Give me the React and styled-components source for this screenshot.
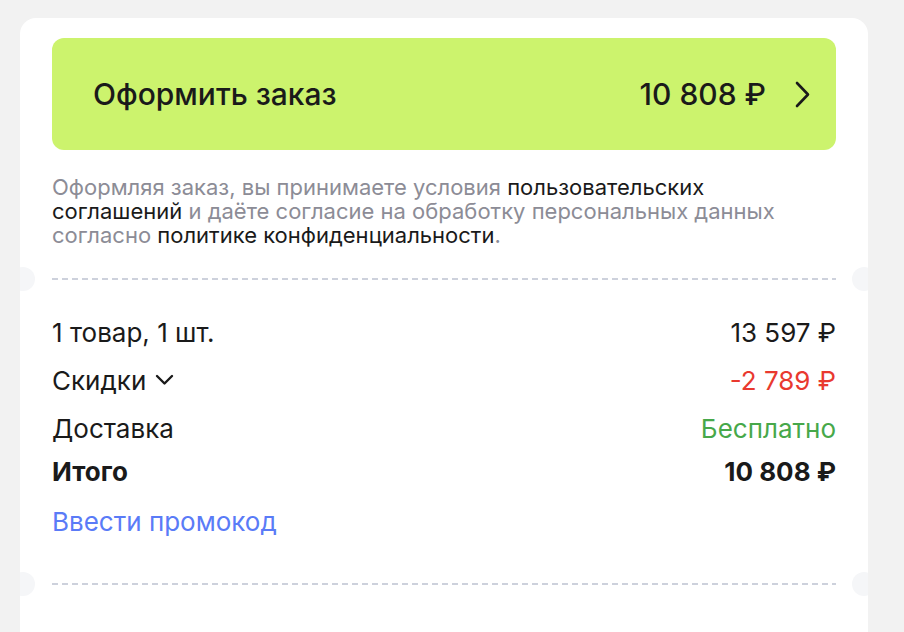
import React from 'react'
import styled, { createGlobalStyle } from 'styled-components'

const GlobalStyle = createGlobalStyle`
    html, body {
        margin: 0;
        padding: 0;
        background: #f2f2f2;
    }
    body {
        font-family: Inter, "Noto Sans", sans-serif;
        color: #1a1a1a;
        -webkit-font-smoothing: antialiased;
    }
`

const Page = styled.div`
    padding: 18px 0 0 20px;
    height: 614px;
    overflow: hidden;
`

const Card = styled.div`
    position: relative;
    width: 848px;
    min-height: 614px;
    box-sizing: border-box;
    background: #fff;
    border-radius: 16px 16px 0 0;
    padding: 20px 32px 0;
    overflow: hidden;
`

const CheckoutButton = styled.button`
    width: 100%;
    height: 112px;
    border: none;
    border-radius: 12px;
    background: #ccf36d;
    display: flex;
    align-items: center;
    justify-content: space-between;
    padding: 0 26px 0 41px;
    font-family: inherit;
    color: #1a1a1a;
    cursor: pointer;
    .label {
        font-size: 30px;
        font-weight: 500;
    }
    .total {
        display: flex;
        align-items: center;
        gap: 28px;
        font-size: 30px;
        font-weight: 500;
    }
`

const Legal = styled.p`
    margin: 25px 0 0;
    max-width: 745px;
    font-size: 22px;
    line-height: 24px;
    color: #8c8c96;
    a {
        color: #1a1a1a;
        text-decoration: none;
    }
`

const Divider = styled.div`
    position: relative;
    height: 2px;
    margin: ${props => props.$top}px 0 0;
    background-image: linear-gradient(to right, #cdd1dc 60%, transparent 60%);
    background-size: 10px 2px;
    &:before, &:after {
        content: '';
        position: absolute;
        top: -11px;
        width: 24px;
        height: 24px;
        border-radius: 50%;
        background: #f5f6f8;
    }
    &:before {
        left: -41px;
    }
    &:after {
        right: -40px;
    }
`

const Summary = styled.div`
    display: flex;
    flex-direction: column;
    gap: 16px;
    padding: 36px 0 0;
`

const Row = styled.div`
    display: flex;
    justify-content: space-between;
    align-items: center;
    height: 32px;
    font-size: 26px;
    font-weight: ${props => props.$bold ? 700 : 400};
    margin-top: ${props => props.$shift || 0}px;
`

const Value = styled.span`
    color: ${props => props.$color || '#1a1a1a'};
`

const Toggle = styled.span`
    display: flex;
    align-items: center;
    gap: 9px;
`

const PromoLink = styled.a`
    display: block;
    font-size: 26px;
    line-height: 32px;
    color: #5a7bf7;
    text-decoration: none;
    margin-top: 19px;
`

const ChevronRight = () => (
    <svg width="16" height="27" viewBox="0 0 16 27" fill="none">
        <polyline points="3,2 14,13.5 3,25" stroke="#1a1a1a" strokeWidth="2.6" strokeLinecap="round" strokeLinejoin="round" />
    </svg>
)

const ChevronDown = () => (
    <svg width="19" height="12" viewBox="0 0 19 12" fill="none">
        <polyline points="2,2 9.5,9.5 17,2" stroke="#1a1a1a" strokeWidth="2.4" strokeLinecap="round" strokeLinejoin="round" />
    </svg>
)

export default function App() {
    return (
        <>
            <GlobalStyle />
            <Page>
                <Card>
                    <CheckoutButton type='button'>
                        <span className='label'>Оформить заказ</span>
                        <span className='total'>
                            10 808 ₽
                            <ChevronRight />
                        </span>
                    </CheckoutButton>
                    <Legal>
                        Оформляя заказ, вы принимаете условия <a href='#'>пользовательских соглашений</a> и даёте согласие на обработку персональных данных согласно <a href='#'>политике конфиденциальности</a>.
                    </Legal>
                    <Divider $top={31} />
                    <Summary>
                        <Row>
                            <span>1 товар, 1 шт.</span>
                            <Value>13 597 ₽</Value>
                        </Row>
                        <Row>
                            <Toggle>Скидки <ChevronDown /></Toggle>
                            <Value $color='#e9392f'>-2 789 ₽</Value>
                        </Row>
                        <Row>
                            <span>Доставка</span>
                            <Value $color='#47a84a'>Бесплатно</Value>
                        </Row>
                        <Row $bold $shift={-5}>
                            <span>Итого</span>
                            <Value>10 808 ₽</Value>
                        </Row>
                    </Summary>
                    <PromoLink href='#'>Ввести промокод</PromoLink>
                    <Divider $top={45} />
                </Card>
            </Page>
        </>
    )
}
